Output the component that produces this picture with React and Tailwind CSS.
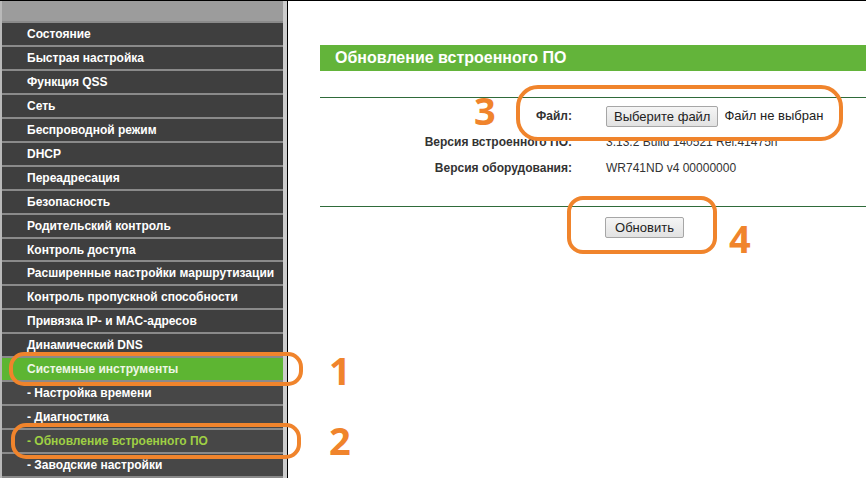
import React from "react";

const menu = [
  { label: "Состояние" },
  { label: "Быстрая настройка" },
  { label: "Функция QSS" },
  { label: "Сеть" },
  { label: "Беспроводной режим" },
  { label: "DHCP" },
  { label: "Переадресация" },
  { label: "Безопасность" },
  { label: "Родительский контроль" },
  { label: "Контроль доступа" },
  { label: "Расширенные настройки маршрутизации" },
  { label: "Контроль пропускной способности" },
  { label: "Привязка IP- и MAC-адресов" },
  { label: "Динамический DNS" },
  { label: "Системные инструменты", active: true },
  { label: "- Настройка времени", sub: true },
  { label: "- Диагностика", sub: true },
  { label: "- Обновление встроенного ПО", sub: true, current: true },
  { label: "- Заводские настройки", sub: true },
];

function MenuItem({ item }) {
  let bg = "bg-[#3f3f3f] text-white";
  if (item.active) bg = "bg-[#5db532] text-[#eef6e6]";
  else if (item.current) bg = "bg-[#474747] text-[#9fd044]";
  else if (item.sub) bg = "bg-[#474747] text-white";
  return (
    <div className={`h-[22px] mb-[2px] flex items-center pl-[25px] text-[12px] font-bold whitespace-nowrap ${bg}`}>
      {item.label}
    </div>
  );
}

function Row({ label, children }) {
  return (
    <div className="flex items-center h-[26px] text-[12px] text-[#333]">
      <div className="w-[252px] text-right font-bold">{label}</div>
      <div className="ml-[34px] flex items-center">{children}</div>
    </div>
  );
}

const numFont = { fontFamily: '"Open Sans", sans-serif' };

export default function App() {
  return (
    <div
      className="relative w-[866px] h-[478px] overflow-hidden bg-white border-t border-black flex"
      style={{ fontFamily: '"Liberation Sans", Arial, sans-serif' }}
    >
      <div className="w-[288px] shrink-0 flex border-r border-black">
        <div className="w-[2px] bg-[#b9b9b9]" />
        <div className="flex-1 bg-[#8a8a8a] flex flex-col">
          <div className="h-[20px] mb-[2px] bg-[#9c9c9c]" />
          {menu.map((m) => (
            <MenuItem key={m.label} item={m} />
          ))}
        </div>
        <div className="w-[4px] bg-[#cdcdcd]" />
      </div>

      <div className="flex-1 pl-[32px] pt-[44px]">
        <div className="h-[26px] bg-[#63b43a] flex items-center pl-[15px] text-white font-bold text-[16px]">
          Обновление встроенного ПО
        </div>
        <div className="mt-[26px] h-px bg-[#2f6b3a]" />
        <div className="pt-[5px]">
          <Row label="Файл:">
            <button className="h-[21px] px-[7px] border border-[#a6a6a6] rounded-[2px] bg-gradient-to-b from-[#f5f5f5] to-[#e2e2e2] text-[13px] text-[#222]">
              Выберите файл
            </button>
            <span className="ml-[6px] text-[13px] text-[#222]">Файл не выбран</span>
          </Row>
          <Row label="Версия встроенного ПО:">3.13.2 Build 140521 Rel.41475n</Row>
          <Row label="Версия оборудования:">WR741ND v4 00000000</Row>
        </div>
        <div className="mt-[25px] h-px bg-[#2f6b3a]" />
        <div className="pl-[285px] pt-[8px]">
          <button className="h-[21px] w-[79px] border border-[#a6a6a6] rounded-[2px] bg-gradient-to-b from-[#f5f5f5] to-[#e2e2e2] text-[13px] text-[#222]">
            Обновить
          </button>
        </div>
      </div>

      <svg className="absolute inset-0 pointer-events-none" width="866" height="478">
        <g fill="none" stroke="#f0842c" strokeWidth="4">
          <rect x="518" y="86" width="323" height="52" rx="20" />
          <rect x="569" y="197" width="146" height="54" rx="14" />
          <rect x="11" y="353" width="290" height="30" rx="13" />
          <rect x="13" y="424" width="286" height="32" rx="13" />
        </g>
      </svg>
      <div className="absolute left-[474px] top-[90px] text-[38px] font-bold text-[#f0842c] leading-none" style={numFont}>
        3
      </div>
      <div className="absolute left-[729px] top-[218px] text-[38px] font-bold text-[#f0842c] leading-none" style={numFont}>
        4
      </div>
      <div className="absolute left-[329px] top-[350px] text-[38px] font-bold text-[#f0842c] leading-none" style={numFont}>
        1
      </div>
      <div className="absolute left-[329px] top-[420px] text-[38px] font-bold text-[#f0842c] leading-none" style={numFont}>
        2
      </div>
    </div>
  );
}
